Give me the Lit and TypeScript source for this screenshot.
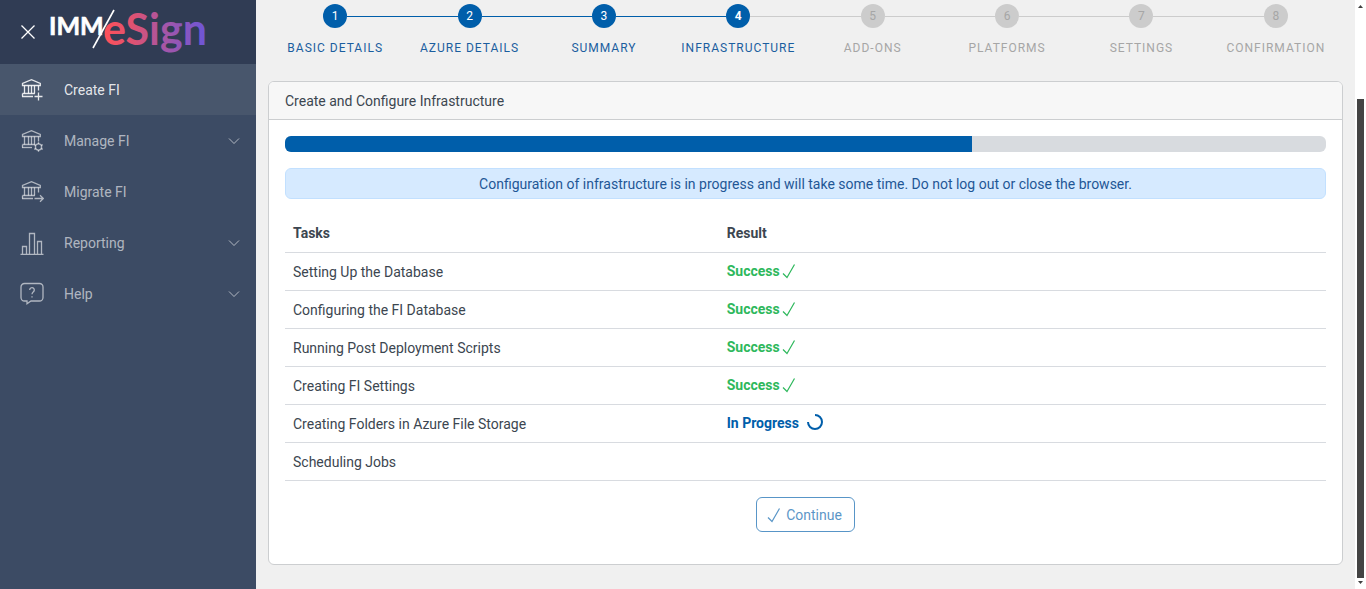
import { LitElement, html, css, svg } from "lit";
import { customElement, property } from "lit/decorators.js";
import { classMap } from "lit/directives/class-map.js";
import { styleMap } from "lit/directives/style-map.js";

type IconName = "create" | "manage" | "migrate" | "report" | "help";

interface NavItem {
  label: string;
  icon: IconName;
  expandable: boolean;
  active?: boolean;
}

interface Task {
  name: string;
  state: "success" | "progress" | "pending";
}

const NAV: NavItem[] = [
  { label: "Create FI", icon: "create", expandable: false, active: true },
  { label: "Manage FI", icon: "manage", expandable: true },
  { label: "Migrate FI", icon: "migrate", expandable: false },
  { label: "Reporting", icon: "report", expandable: true },
  { label: "Help", icon: "help", expandable: true },
];

const STEPS = [
  "Basic Details",
  "Azure Details",
  "Summary",
  "Infrastructure",
  "Add-ons",
  "Platforms",
  "Settings",
  "Confirmation",
];

const TASKS: Task[] = [
  { name: "Setting Up the Database", state: "success" },
  { name: "Configuring the FI Database", state: "success" },
  { name: "Running Post Deployment Scripts", state: "success" },
  { name: "Creating FI Settings", state: "success" },
  { name: "Creating Folders in Azure File Storage", state: "progress" },
  { name: "Scheduling Jobs", state: "pending" },
];

const bank = svg`
  <path d="M2.500 7.500V5.500L11.500 1.700l8.800 3.800v2z"/>
  <path d="M4.500 7.500v8M8.500 7.500v8M11.500 7.500v8M14.500 7.500v8M18.500 7.500v5"/>
  <path d="M2.500 15.500h12.300M2.500 15.500v3"/>`;

const ICONS = {
  create: svg`${bank}<path d="M2 18.500h11M14.500 18.500h8M18.500 14.500v8"/>`,
  manage: svg`${bank}<path d="M2 18.500h10"/>
    <circle cx="18.500" cy="18" r="3.100"/>
    <path d="M18.500 13.200v1.700M18.500 21.100v1.700M14.300 15.600l1.500.9M21.200 19.500l1.500.9M14.300 20.400l1.500-.9M21.200 16.500l1.500-.9"/>`,
  migrate: svg`${bank}<path d="M2 18.500h11M14.500 18.500h8.800M20 15.300l3.300 3.200-3.300 3.200"/>`,
  report: svg`<path d="M.5 23.500h23M2.500 23.500v-8h4v8M9.500 23.500v-21h5v21M17.500 23.500v-13h4v13"/>`,
  help: svg`<path d="M4.500 1.500h15a3.500 3.500 0 0 1 3.500 3.500v10.500a3.500 3.500 0 0 1-3.500 3.500H11l-4 2.800V19H4.500A3.500 3.500 0 0 1 1 15.500V5a3.500 3.500 0 0 1 3.500-3.500z"/>
    <path d="M9.700 8a2.300 2.300 0 1 1 3.700 1.800c-1 .8-1.400 1.200-1.400 2.400"/><path d="M12 14.300v1.300"/>`,
};

const check = html`<svg class="check" width="14" height="16" viewBox="0 0 14 16" aria-hidden="true">
  <path d="M1 9.500l4 4L12.500 0.500" />
</svg>`;

@customElement("app-sidebar")
class AppSidebar extends LitElement {
  static styles = css`
    :host {
      display: block;
      flex: 0 0 256px;
      background: #3c4b64;
      color: rgba(255, 255, 255, 0.6);
    }
    .brand {
      display: flex;
      align-items: center;
      gap: 12px;
      height: 64px;
      padding-left: 20px;
      background: #303c54;
    }
    .close {
      display: flex;
      padding: 0;
      border: 0;
      background: none;
      cursor: pointer;
    }
    .close path {
      stroke: #fff;
      stroke-width: 1.3;
    }
    .logo-text {
      font-family: Lato, sans-serif;
      font-weight: 700;
    }
    .logo-name {
      fill: #fff;
      stroke: #fff;
      stroke-width: 0.6;
    }
    .logo-slash {
      stroke: #fff;
      stroke-width: 1.6;
    }
    .item {
      display: flex;
      align-items: center;
      gap: 20px;
      height: 51px;
      padding: 0 16px 0 20px;
      color: inherit;
      text-decoration: none;
    }
    .item.active {
      background: #48566c;
      color: rgba(255, 255, 255, 0.87);
    }
    .icon {
      fill: none;
      stroke: currentColor;
      stroke-width: 1.3;
    }
    .label {
      flex: 1;
      padding-top: 2px;
    }
    .chevron {
      fill: none;
      stroke: currentColor;
    }
  `;

  render() {
    return html`
      <div class="brand">
        <button class="close" aria-label="Close menu">
          <svg width="16" height="16" viewBox="0 0 16 16"><path d="M1.500 1.500l13 13M14.500 1.500l-13 13" /></svg>
        </button>
        <svg width="160" height="56" viewBox="0 0 160 56" role="img" aria-label="IMM/eSign">
          <defs>
            <linearGradient id="brand" x1="0" x2="1">
              <stop offset="0" stop-color="#ff5158" />
              <stop offset="0.3" stop-color="#dd5273" />
              <stop offset="0.6" stop-color="#a456a8" />
              <stop offset="1" stop-color="#6b56d8" />
            </linearGradient>
          </defs>
          <text class="logo-text logo-name" x="1" y="31" font-size="25">IMM</text>
          <path class="logo-slash" d="M45 44L66 6" />
          <text class="logo-text" x="55" y="41" font-size="43" fill="url(#brand)">eSign</text>
        </svg>
      </div>
      <nav>
        ${NAV.map(
          (item) => html`<a class=${classMap({ item: true, active: !!item.active })} href="#">
            <svg class="icon" width="24" height="24" viewBox="0 0 24 24" aria-hidden="true">${ICONS[item.icon]}</svg>
            <span class="label">${item.label}</span>
            ${item.expandable
              ? html`<svg class="chevron" width="12" height="8" viewBox="0 0 12 8" aria-hidden="true">
                  <path d="M1 1.500l5 5 5-5" />
                </svg>`
              : ""}
          </a>`
        )}
      </nav>
    `;
  }
}

@customElement("app-stepper")
class AppStepper extends LitElement {
  @property({ type: Number }) current = 1;

  static styles = css`
    :host {
      display: block;
    }
    .steps {
      display: flex;
      margin: 0;
      padding: 0;
      list-style: none;
    }
    .step {
      flex: 1 1 0;
      min-width: 0;
      text-align: center;
      color: #a6a6a6;
    }
    .rail {
      display: flex;
      align-items: center;
    }
    .rail::before,
    .rail::after {
      content: "";
      flex: 1;
      height: 1px;
      background: #ccc;
    }
    .done .rail::before,
    .done:not(.current) .rail::after {
      background: #005eaa;
    }
    .step:first-child .rail::before,
    .step:last-child .rail::after {
      background: none;
    }
    .dot {
      width: 24px;
      height: 24px;
      border-radius: 50%;
      background: #ccc;
      font-size: 12px;
      line-height: 24px;
    }
    .name {
      margin-top: 11px;
      font-size: 12px;
      line-height: 18px;
      letter-spacing: 1px;
      text-transform: uppercase;
      white-space: nowrap;
    }
    .done {
      color: #1b5e9f;
    }
    .done .dot {
      background: #005eaa;
      color: #fff;
    }
    .current .dot {
      font-weight: 700;
    }
  `;

  render() {
    return html`<ol class="steps">
      ${STEPS.map((name, i) => {
        const n = i + 1;
        return html`<li class=${classMap({ step: true, done: n <= this.current, current: n === this.current })}>
          <div class="rail"><span class="dot">${n}</span></div>
          <div class="name">${name}</div>
        </li>`;
      })}
    </ol>`;
  }
}

@customElement("app-root")
class AppRoot extends LitElement {
  @property({ type: Number }) progress = 66;

  static styles = css`
    :host {
      display: flex;
      min-height: 100vh;
      background: #f0f0f0;
      color: #3c4650;
      font-family: Roboto, sans-serif;
      font-size: 14px;
      line-height: 21px;
    }
    .main {
      flex: 1;
      min-width: 0;
      padding: 4px 12px 24px;
    }
    .card {
      margin-top: 24px;
      border: 1px solid #ccced0;
      border-radius: 6px;
      background: #fff;
      overflow: hidden;
    }
    .card-head {
      margin: 0;
      padding: 9px 16px 7px;
      border-bottom: 1px solid #ccced0;
      background: #f7f7f7;
      font-size: 14px;
      font-weight: 400;
    }
    .card-body {
      display: flex;
      flex-direction: column;
      gap: 16px;
      padding: 16px 16px 32px;
    }
    .progress {
      height: 16px;
      border-radius: 6px;
      background: #d8dbdf;
      overflow: hidden;
    }
    .bar {
      height: 100%;
      background: #005eaa;
    }
    .notice {
      padding: 5px 16px 3px;
      border: 1px solid #c2e0ff;
      border-radius: 6px;
      background: #d6eaff;
      color: #1f5796;
      text-align: center;
    }
    .tasks {
      width: 100%;
      border-collapse: separate;
      border-spacing: 0;
      table-layout: fixed;
    }
    .tasks th,
    .tasks td {
      height: 21px;
      padding: 8px;
      border-bottom: 1px solid #d8dbe0;
      text-align: left;
      vertical-align: top;
    }
    .tasks .task {
      padding: 9px 8px 7px;
    }
    .tasks th:first-child {
      width: calc(100% * 5 / 12);
      box-sizing: border-box;
    }
    .result {
      display: flex;
      align-items: center;
      font-weight: 700;
    }
    .success {
      gap: 2px;
      color: #2eb85c;
    }
    .running {
      gap: 8px;
      color: #005eaa;
    }
    .check,
    .spinner {
      fill: none;
      stroke: currentColor;
      stroke-width: 1.2;
    }
    .spinner {
      stroke-width: 2;
    }
    .actions {
      display: flex;
      justify-content: center;
    }
    .continue {
      display: flex;
      align-items: center;
      gap: 5px;
      padding: 7px 12px 5px 10px;
      border: 1px solid #005eaa;
      border-radius: 6px;
      background: none;
      color: #005eaa;
      font: inherit;
      opacity: 0.65;
    }
    .scrollbar {
      display: flex;
      flex-direction: column;
      align-items: center;
      box-sizing: border-box;
      flex: 0 0 11px;
      padding: 5px 0;
      background: #fff;
    }
    .arrow {
      fill: #404040;
    }
    .track {
      display: flex;
      align-items: flex-end;
      flex: 1;
      padding-bottom: 3px;
    }
    .thumb {
      width: 7px;
      height: 84%;
      background: #444;
    }
  `;

  private renderResult(state: Task["state"]) {
    if (state === "success") {
      return html`<div class="result success"><span>Success</span>${check}</div>`;
    }
    if (state === "progress") {
      return html`<div class="result running">
        <span>In Progress</span>
        <svg class="spinner" width="16" height="19" viewBox="0 0 16 19" aria-hidden="true">
          <path d="M8 1a7 7 0 1 1-7 7" />
        </svg>
      </div>`;
    }
    return "";
  }

  render() {
    return html`
      <app-sidebar></app-sidebar>
      <main class="main">
        <app-stepper .current=${4}></app-stepper>
        <section class="card">
          <h1 class="card-head">Create and Configure Infrastructure</h1>
          <div class="card-body">
            <div class="progress" role="progressbar" aria-label="Configuration progress" aria-valuenow=${this.progress}>
              <div class="bar" style=${styleMap({ width: `${this.progress}%` })}></div>
            </div>
            <div class="notice" role="status">
              Configuration of infrastructure is in progress and will take some time. Do not log out or close the browser.
            </div>
            <table class="tasks">
              <thead>
                <tr><th scope="col">Tasks</th><th scope="col">Result</th></tr>
              </thead>
              <tbody>
                ${TASKS.map((t) => html`<tr><td class="task">${t.name}</td><td>${this.renderResult(t.state)}</td></tr>`)}
              </tbody>
            </table>
            <div class="actions">
              <button class="continue" disabled>${check}<span>Continue</span></button>
            </div>
          </div>
        </section>
      </main>
      <div class="scrollbar" aria-hidden="true">
        <svg class="arrow" width="5" height="3" viewBox="0 0 5 3"><path d="M0 3L2.500 0 5 3z" /></svg>
        <div class="track"><div class="thumb"></div></div>
        <svg class="arrow" width="5" height="3" viewBox="0 0 5 3"><path d="M0 0h5L2.500 3z" /></svg>
      </div>
    `;
  }
}
